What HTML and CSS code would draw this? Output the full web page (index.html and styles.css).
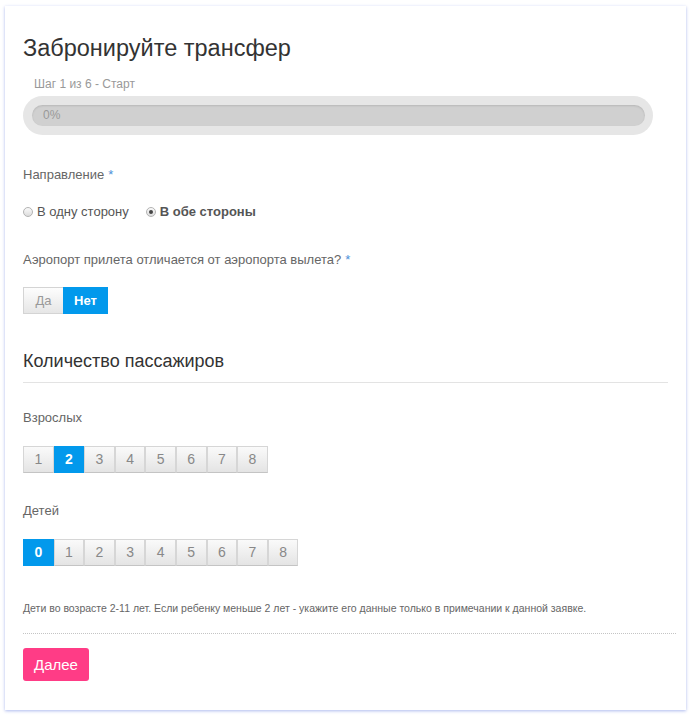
FILE: index.html
```html
<!DOCTYPE html>
<html lang="ru">
<head>
  <meta charset="UTF-8" />
  <meta name="viewport" content="width=device-width, initial-scale=1.0" />
  <title>Забронируйте трансфер</title>
  <link rel="stylesheet" href="styles.css">
</head>
<body>
  <div class="card">
    <h1 class="title">Забронируйте трансфер</h1>
    <div class="step">Шаг 1 из 6 - Старт</div>
    <div class="progress">
      <div class="progress-bar">0%</div>
    </div>

    <div class="label">Направление<span class="req">*</span></div>
    <div class="radios">
      <label class="radio"><span class="dot"></span>В одну сторону</label>
      <label class="radio checked"><span class="dot"></span>В обе стороны</label>
    </div>

    <div class="label label-q">Аэропорт прилета отличается от аэропорта вылета?<span class="req">*</span></div>
    <div class="toggle">
      <span class="tbtn tbtn-yes">Да</span>
      <span class="tbtn tbtn-no active">Нет</span>
    </div>

    <h2 class="section">Количество пассажиров</h2>

    <div class="label label-adults">Взрослых</div>
    <div class="nums" id="adults"></div>

    <div class="label label-kids">Детей</div>
    <div class="nums" id="kids"></div>

    <p class="note">Дети во возрасте 2-11 лет. Если ребенку меньше 2 лет - укажите его данные только в примечании к данной заявке.</p>
    <div class="dots"></div>
    <button class="next">Далее</button>
  </div>

  <script>
    function renderNums(id, from, to, active) {
      const box = document.getElementById(id);
      for (let i = from; i <= to; i++) {
        const b = document.createElement('span');
        b.className = 'num' + (i === active ? ' active' : '');
        b.textContent = i;
        box.appendChild(b);
      }
    }
    renderNums('adults', 1, 8, 2);
    renderNums('kids', 0, 8, 0);
  </script>
</body>
</html>
```

FILE: styles.css
```css
* { box-sizing: border-box; margin: 0; padding: 0; }
body { background: #fff; font-family: 'Liberation Sans', Arial, sans-serif; color: #666; }

.card { margin: 6px 5px 7px 5px; padding: 29px 10px 29px 18px; background: #fff; box-shadow: 0 1px 3px rgba(70, 100, 220, 0.45); height: 704px; }

.title { font-size: 23.5px; line-height: 26px; font-weight: normal; color: #333; }
.step { margin-top: 15px; padding-left: 11px; font-size: 12px; line-height: 16px; color: #999; }

.progress { margin-top: 4px; width: 630px; padding: 9px 8px 9px 9px; background: #e6e6e6; border-radius: 20px; }
.progress-bar { height: 21px; border-radius: 11px; background: #d0d0d0; box-shadow: inset 0 1px 2px rgba(0,0,0,0.12); font-size: 12px; line-height: 21px; color: #999; padding-left: 11px; }

.label { margin-top: 31px; font-size: 13px; line-height: 18px; color: #666; }
.req { color: #4a90d9; margin-left: 4px; }
.label-q { margin-top: 30px; }
.label-adults { margin-top: 26px; }
.label-kids { margin-top: 29px; }

.radios { margin-top: 19px; display: flex; gap: 17px; font-size: 13px; line-height: 18px; color: #555; }
.radio { display: flex; align-items: center; gap: 4px; }
.radio.checked { font-weight: bold; }
.dot { width: 10px; height: 10px; border-radius: 50%; border: 1px solid #b3b3b3; background: linear-gradient(#fafafa, #dcdcdc); position: relative; }
.radio.checked .dot::after { content: ''; position: absolute; left: 2px; top: 2px; width: 4px; height: 4px; border-radius: 50%; background: #444; }

.toggle { margin-top: 18px; display: flex; }
.tbtn { height: 27px; font-size: 13px; line-height: 27px; text-align: center; }
.tbtn-yes { width: 40px; color: #999; background: linear-gradient(#fdfdfd, #e6e6e6); border: 1px solid #d4d4d4; border-right: none; line-height: 25px; }
.tbtn-no { width: 45px; }
.active { background: #0299ec; color: #fff; font-weight: bold; }

.section { margin-top: 36px; margin-right: 8px; padding-bottom: 10px; border-bottom: 1px solid #e3e3e3; font-size: 18px; line-height: 22px; font-weight: normal; color: #333; }

.nums { margin-top: 19px; display: flex; }
.num { width: 30.6px; height: 27px; text-align: center; font-size: 14px; line-height: 25px; color: #888; background: linear-gradient(#fafafa, #e4e4e4); border: 1px solid #d6d6d6; border-bottom-color: #c4c4c4; }
.num.active { background: #0299ec; border-color: #0299ec; color: #fff; font-weight: bold; }

.note { margin-top: 35px; font-size: 10.5px; line-height: 14px; color: #666; }
.dots { margin-top: 18px; border-top: 1px dotted #c4c4c4; }

.next { margin-top: 14px; width: 66px; height: 33px; border: none; border-radius: 3px; background: #ff3c86; color: #fff; font-family: 'Liberation Sans', Arial, sans-serif; font-size: 15px; cursor: pointer; }
```
